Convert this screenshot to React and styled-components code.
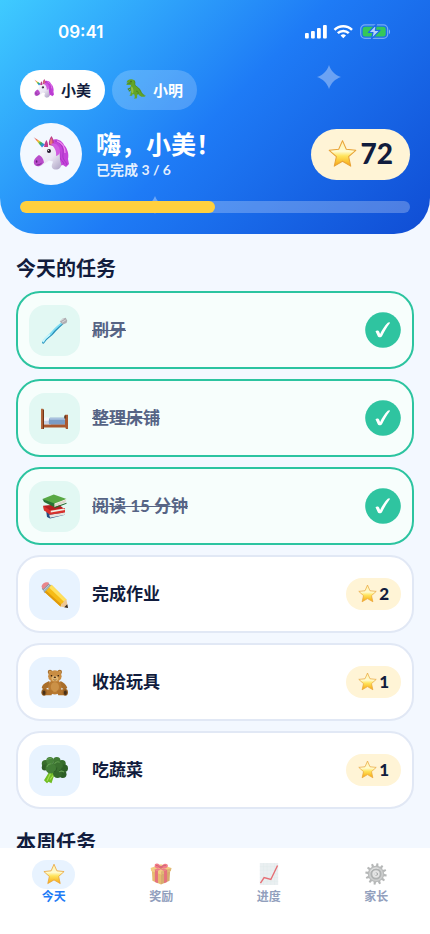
import { useState } from 'react'
import styled, { createGlobalStyle } from 'styled-components'

const GlobalStyle = createGlobalStyle`
    * {
        box-sizing: border-box;
    }
    body {
        margin: 0;
        background: #f3f8ff;
        color: #111c3d;
        font-family: 'Lato', 'Noto Sans CJK SC', sans-serif;
    }
    button {
        font-family: inherit;
        color: inherit;
        border: none;
        cursor: pointer;
    }
    h1, h2, p, ul {
        margin: 0;
        padding: 0;
    }
`

const Screen = styled.div`
    height: 100vh;
    display: flex;
    flex-direction: column;
    overflow: hidden;
`

const Header = styled.header`
    position: relative;
    flex-shrink: 0;
    padding: 0 20px 21px;
    color: #fff;
    border-radius: 0 0 36px 36px;
    background: linear-gradient(135deg, #3fcbff 0%, #1e7bf6 50%, #104dd4 100%);
`

const StatusBar = styled.div`
    display: flex;
    align-items: center;
    justify-content: space-between;
    height: 64px;
    padding: 0 20px 0 38px;
    margin-bottom: 6px;
`

const Clock = styled.span`
    font-family: 'Inter', sans-serif;
    font-size: 17px;
    font-weight: 600;
`

const Sparkle = styled.svg`
    position: absolute;
    left: ${({ $left }) => $left};
    top: ${({ $top }) => $top};
    fill: #fff;
    opacity: 0.35;
`

const Kids = styled.div`
    display: flex;
    gap: 7px;
    margin-bottom: 13px;
`

const KidChip = styled.button`
    display: flex;
    align-items: center;
    gap: 7px;
    height: 40px;
    padding: 0 14px 2px;
    border-radius: 20px;
    font-size: 15px;
    font-weight: 700;
    background: ${({ $active }) => ($active ? '#fff' : 'rgba(255, 255, 255, 0.2)')};
    && {
        color: ${({ $active }) => ($active ? '#111c3d' : '#fff')};
    }
`

const Profile = styled.div`
    display: flex;
    align-items: center;
    gap: 14px;
    margin-bottom: 16px;
`

const Avatar = styled.div`
    display: flex;
    align-items: center;
    justify-content: center;
    width: 62px;
    height: 62px;
    border-radius: 50%;
    background: #f3f8ff;
`

const Greeting = styled.div`
    flex: 1;
`

const Hello = styled.h1`
    font-size: 25px;
    line-height: 32px;
    font-weight: 700;
`

const DoneCount = styled.p`
    font-size: 14px;
    line-height: 20px;
    font-weight: 700;
    color: rgba(255, 255, 255, 0.88);
`

const Balance = styled.div`
    display: flex;
    align-items: center;
    gap: 4px;
    height: 51px;
    padding: 0 17px 2px;
    border-radius: 26px;
    background: #fff4d6;
    color: #111c3d;
    font-size: 28px;
    font-weight: 900;
`

const Track = styled.div`
    position: relative;
    height: 12px;
    border-radius: 6px;
    overflow: hidden;
    background: rgba(255, 255, 255, 0.25);
`

const Fill = styled.div`
    height: 100%;
    border-radius: 6px;
    background: #ffd03e;
`

const Main = styled.main`
    flex: 1;
    min-height: 0;
    overflow: hidden;
    display: flex;
    flex-direction: column;
    gap: 21px;
    padding: 22px 16px 0;
`

const SectionTitle = styled.h2`
    font-size: 20px;
    line-height: 24px;
    font-weight: 700;
    margin-bottom: 11px;
`

const TaskList = styled.ul`
    display: flex;
    flex-direction: column;
    gap: 10px;
    list-style: none;
`

const TaskCard = styled.button`
    display: flex;
    align-items: center;
    gap: 12px;
    width: 100%;
    height: 78px;
    padding: 0 11px;
    text-align: left;
    border-radius: 24px;
    && {
        border: 2px solid ${({ $done }) => ($done ? '#2cc4a0' : '#e1e8f5')};
    }
    background: ${({ $done }) => ($done ? '#f7fefc' : '#fff')};
`

const TaskIcon = styled.span`
    display: flex;
    align-items: center;
    justify-content: center;
    width: 51px;
    height: 51px;
    border-radius: 16px;
    background: ${({ $done }) => ($done ? '#e2f8f3' : '#e8f3ff')};
`

const TaskName = styled.span`
    flex: 1;
    padding-bottom: 3px;
    font-size: 17px;
    font-weight: 700;
    color: ${({ $done }) => ($done ? '#566485' : '#111c3d')};
    text-decoration: ${({ $done }) => ($done ? 'line-through' : 'none')};
    text-decoration-thickness: 1px;
`

const Reward = styled.span`
    display: flex;
    align-items: center;
    gap: 2px;
    height: 32px;
    padding: 0 12px 2px;
    border-radius: 16px;
    background: #fff4d6;
    font-size: 17px;
    font-weight: 900;
`

const TabBar = styled.nav`
    flex-shrink: 0;
    display: grid;
    grid-template-columns: repeat(4, 1fr);
    height: 86px;
    padding-top: 12px;
    background: #fff;
`

const Tab = styled.a`
    display: flex;
    flex-direction: column;
    align-items: center;
    text-decoration: none;
    font-size: 12px;
    line-height: 16px;
    font-weight: 700;
    color: ${({ $active }) => ($active ? '#1e7bf6' : '#929fbd')};
`

const TabIcon = styled.span`
    display: flex;
    align-items: center;
    justify-content: center;
    width: 43px;
    height: 29px;
    padding-bottom: 1px;
    border-radius: 15px;
    background: ${({ $active }) => ($active ? '#e8f3ff' : 'transparent')};
    svg {
        opacity: ${({ $active }) => ($active ? 1 : 0.65)};
    }
`

const Unicorn = ({ size }) => (
    <svg width={size} height={size} viewBox="0 0 36 36" aria-hidden="true">
        <defs>
            <linearGradient id="horn" x1="0" y1="0" x2="1" y2="1">
                <stop offset="0" stopColor="#c9b8dd" />
                <stop offset="0.25" stopColor="#f06a50" />
                <stop offset="0.42" stopColor="#f0c52e" />
                <stop offset="0.6" stopColor="#35b35c" />
                <stop offset="0.8" stopColor="#2b8fe6" />
                <stop offset="1" stopColor="#8b50d0" />
            </linearGradient>
            <linearGradient id="face" x1="0" y1="0" x2="1" y2="1">
                <stop offset="0" stopColor="#fff" />
                <stop offset="0.6" stopColor="#e9e5f2" />
                <stop offset="1" stopColor="#aaa0c2" />
            </linearGradient>
        </defs>
        <path d="M17 6C20 1 29 3 31 9c4 4 5 10 4 14l1 5-3 3-3-2-4 1-5-12z" fill="#c443d9" />
        <path d="M22 5c6 1 9 7 8 13s3 7 4 11M19 7c7 1 8 8 8 13s3 4 4 8" stroke="#a22fc0" strokeWidth="0.8" fill="none" />
        <path d="M24 5c6 2 8 7 8 12" stroke="#ef8bee" strokeWidth="1.3" fill="none" />
        <path d="M12 9c3-3 10-2 13 3 3 6 1 11 3 15 1 3-1 6-4 6.500-4 .5-6-2-5-5l1-3-4-1-7 5c-3 2-7 1-7.500-2-.5-4 4-6 6-10 2-4 2-6 4.500-8.500z" fill="url(#face)" />
        <path d="M6 19c-3 2-6 5-5 8.500 1 3 5 4 8 1l2-2c-1-4-2-6-5-7.500z" fill="#b94ccb" />
        <path d="M3.500 29c2 0 3.500-.6 5-1.700" stroke="#702084" strokeWidth="0.8" fill="none" />
        <ellipse cx="3.600" cy="25.500" rx="0.800" ry="1.200" fill="#631c77" />
        <path d="M0.500 1l11.500 7.500-3 3z" fill="url(#horn)" />
        <path d="M11 11c1-4 1-5 2.500-7 1 2 2 4 1.500 7zM16 9c-.5-4 .5-6 2.500-9 2 3 3 6 2 10z" fill="#bd3d8b" />
        <path d="M17 8c-.2-3 .4-4 1.300-6 1 2 1.300 4 .9 7z" fill="#e57a74" />
        <path d="M18 8c3 3 6 7 5 12 4-1 5-5 3-9-2-3-5-5-8-3z" fill="#d15be2" />
        <circle cx="16" cy="15" r="2" fill="#23182d" />
        <circle cx="15.400" cy="14.300" r="0.600" fill="#fff" />
    </svg>
)

const Dino = ({ size }) => (
    <svg width={size} height={size} viewBox="0 0 36 36" aria-hidden="true">
        <path d="M1 6C2 1 8-1 12 1c5 1 5 5 4 9 2 4 8 5 11 11 2 6 4 8 9 9-5 4-11 2-14-3l-2 1 0 5-1 2h-5l2-2-1-5-3-1-1 3h-5l2-2 1-8c-1-4-1-6 0-9l-7 0-2-2 6-2-6-1z" fill="#62a428" />
        <path d="M10 13c3 3 4 6 3 11l-2 2c-2-4-3-9-1-13z" fill="#93c046" />
        <path d="M9 16l-5 2 1 2M9 19l-4 3" stroke="#4d8a1d" strokeWidth="2" fill="none" />
        <path d="M15 3c2 4 0 7 2 9 4 3 7 5 9 10 2 4 4 6 7 7" stroke="#4b861f" strokeWidth="1.200" fill="none" />
        <path d="M18 22c4-1 5 3 3 6" stroke="#3f7a1a" strokeWidth="1.200" fill="none" />
        <path d="M2 8l8-1" stroke="#315d14" strokeWidth="0.900" />
        <circle cx="9" cy="4" r="1" fill="#262d10" />
    </svg>
)

const Star = ({ size }) => (
    <svg width={size} height={size} viewBox="0 0 36 36" aria-hidden="true">
        <defs>
            <linearGradient id="starGold" x1="0" y1="0" x2="0" y2="1">
                <stop offset="0" stopColor="#fff0a8" />
                <stop offset="0.42" stopColor="#fffbd0" />
                <stop offset="0.6" stopColor="#ffe45c" />
                <stop offset="1" stopColor="#f7a511" />
            </linearGradient>
        </defs>
        <path
            d="M18 2l4.700 10.800 11.800 1.200-8.900 8 2.600 11.700L18 27.700 7.800 33.700l2.600-11.700-8.900-8 11.800-1.200z"
            fill="url(#starGold)"
            stroke="#e8a338"
            strokeWidth="1.300"
            strokeLinejoin="round"
        />
    </svg>
)

const Toothbrush = ({ size }) => (
    <svg width={size} height={size} viewBox="0 0 36 36" aria-hidden="true">
        <path d="M3 34c4-7 9-8 13-13 4-5 8-8 14-14" stroke="#278fb9" strokeWidth="3.200" strokeLinecap="round" fill="none" />
        <path d="M3 33c3-7 9-8 12-13 4-5 8-8 14-13" stroke="#7fdef4" strokeWidth="2.400" strokeLinecap="round" fill="none" />
        <path d="M3 32c2-4 5-6 8-8" stroke="#c6f5fc" strokeWidth="2.400" strokeLinecap="round" fill="none" />
        <path d="M25 6l4-4 4-1 2 4-1 3-5 2z" fill="#aeadb1" />
        <path d="M26 5l5-3M28 7l5-3" stroke="#e4e4e6" strokeWidth="1" />
    </svg>
)

const Bed = ({ size }) => (
    <svg width={size} height={size} viewBox="0 0 36 36" aria-hidden="true">
        <path d="M0 5h3v27H0z" fill="#b5683c" />
        <path d="M2.500 6h1.500v26H2.500z" fill="#713619" />
        <path d="M4 25h29v5H4z" fill="#a9582c" />
        <path d="M4 25h29v1.300H4z" fill="#d28759" />
        <path d="M4 20h9v6H4z" fill="#c8d3e4" />
        <path d="M4 17c3-1 6-1 8 1v3H4z" fill="#f5f7fb" />
        <path d="M12 17h20v9H11c-1-3-1-7 1-9z" fill="#7b9cc4" />
        <path d="M12 17h20v2.500H11.500z" fill="#a9c2df" />
        <path d="M32 13h4v19h-3V30h-1z" fill="#a9582f" />
        <path d="M31 14h2v4h-2z" fill="#53331f" />
    </svg>
)

const Books = ({ size }) => (
    <svg width={size} height={size} viewBox="0 0 36 36" aria-hidden="true">
        <path d="M7 25l20-2 5 6-20 5-4-2z" fill="#244c80" />
        <path d="M11 29l20-3 1 3-20 4z" fill="#e6e4df" />
        <path d="M3 17l20-2 9 7-20 5-8-4z" fill="#b51e21" />
        <path d="M3 17l9 6 20-3v6l-20 3-8-6z" fill="#d8312c" />
        <path d="M13 23.500l18-3 1 2-19 3.500z" fill="#f2ede5" />
        <path d="M2 8L17 2l17 6-16 8z" fill="#58a844" />
        <path d="M2 8l16 6v5L4 12z" fill="#287334" />
        <path d="M18 14l16-6-1 5-15 6z" fill="#f6f1e8" />
        <path d="M18 16l15-6M18 17.500l15-6" stroke="#bcb5aa" strokeWidth="0.700" />
        <path d="M18 18.500l16-5.500v1.300l-16 6z" fill="#246a2f" />
    </svg>
)

const Pencil = ({ size }) => (
    <svg width={size} height={size} viewBox="0 0 36 36" aria-hidden="true">
        <path d="M9 3l5 3-9 10-4-6z" fill="#8396a4" />
        <path d="M11 5l-8 8M12 6l-8 8" stroke="#d5dfe5" strokeWidth="0.900" />
        <path d="M2 10c-4-4 3-10 8-8l1 1-8 8z" fill="#e9868d" />
        <path d="M14 5l20 20-8 9L5 15z" fill="#f6bb16" />
        <path d="M14 5l20 20-3 3L11 9z" fill="#ffe05c" />
        <path d="M7 13l21 19-2 2L5 15z" fill="#e09a0c" />
        <path d="M34 25l2 11-10-2c1-2 0-3 2-4s2-4 6-5z" fill="#edc794" />
        <path d="M35 31l1 5-5-1z" fill="#302b2b" />
    </svg>
)

const Teddy = ({ size }) => (
    <svg width={size} height={size} viewBox="0 0 36 36" aria-hidden="true">
        <circle cx="12" cy="4" r="3" fill="#a66e2d" />
        <circle cx="25" cy="4" r="3" fill="#a66e2d" />
        <circle cx="12" cy="4" r="1.500" fill="#d6a35a" />
        <circle cx="25" cy="4" r="1.500" fill="#d6a35a" />
        <path d="M11 16c-4 2-9 4-10 9l3 3 9-5zM26 16c4 2 8 5 9 9l-3 3-8-5z" fill="#a96e2b" />
        <ellipse cx="18.500" cy="24" rx="9" ry="10" fill="#b87a32" />
        <ellipse cx="18.500" cy="24" rx="5.500" ry="6.500" fill="#cb9147" />
        <ellipse cx="18.500" cy="9.500" rx="9" ry="8" fill="#c98d43" />
        <ellipse cx="18.500" cy="12.500" rx="4.500" ry="3.500" fill="#e3b773" />
        <ellipse cx="18.500" cy="11" rx="1.600" ry="1.100" fill="#35200f" />
        <path d="M16.500 14c1 1 3 1 4 0" stroke="#62401b" strokeWidth="0.800" fill="none" />
        <circle cx="14" cy="9" r="1.100" fill="#2d1d10" />
        <circle cx="23" cy="9" r="1.100" fill="#2d1d10" />
        <path d="M4 26l12 3-2 6-11 0zM33 26l-12 3 2 6 10 0z" fill="#b1732d" />
        <ellipse cx="4" cy="31" rx="3.500" ry="4.500" fill="#966023" />
        <ellipse cx="32.500" cy="31" rx="3.500" ry="4.500" fill="#966023" />
        <ellipse cx="4" cy="31.500" rx="2" ry="3" fill="#493018" />
        <ellipse cx="32.500" cy="31.500" rx="2" ry="3" fill="#493018" />
    </svg>
)

const Broccoli = ({ size }) => (
    <svg width={size} height={size} viewBox="0 0 36 36" aria-hidden="true">
        <path d="M12 18l6 1 4-2 4 4-9 5-3 9-4-2-2 2-4-4z" fill="#70bd24" />
        <path d="M13 21l-5 11M19 21l-7 9" stroke="#a4de50" strokeWidth="1.600" />
        <circle cx="6" cy="9" r="5" fill="#386d2b" />
        <circle cx="5" cy="14" r="4" fill="#315f27" />
        <circle cx="12" cy="5" r="5" fill="#47833a" />
        <circle cx="21" cy="5" r="5" fill="#417b35" />
        <circle cx="28" cy="9" r="5" fill="#356d2b" />
        <circle cx="31" cy="15" r="5" fill="#2d6026" />
        <circle cx="29" cy="23" r="5" fill="#2c5f25" />
        <circle cx="22" cy="22" r="6" fill="#34682a" />
        <circle cx="22" cy="12" r="7" fill="#3b7230" />
        <circle cx="13" cy="15" r="7" fill="#427d36" />
        <path d="M8 13c1-3 4-4 6-4M18 9c2-3 5-3 7-2M8 4c2-3 4-2 6-2M24 20c2-2 5-1 7 0" stroke="#639e50" strokeWidth="1.400" fill="none" />
        <path d="M17 20c3-1 4-3 4-6M24 18c3 0 4-2 4-4" stroke="#2a5723" strokeWidth="1" fill="none" />
    </svg>
)

const Gift = ({ size }) => (
    <svg width={size} height={size} viewBox="0 0 36 36" aria-hidden="true">
        <path d="M3 12l15 6v17L4 29z" fill="#d99726" />
        <path d="M18 18l15-6-1 17-14 6z" fill="#c18121" />
        <path d="M1 8l17-6 17 6-1 5-16 6-16-6z" fill="#eab542" />
        <path d="M18 14l17-6-1 5-16 6z" fill="#cc902c" />
        <path d="M8 11l5 2v20l-5-2zM28 11l-5 2v20l5-2z" fill="#d8293a" />
        <path d="M7 6l5-2 16 7-5 2zM28 6l-5-2-16 7 5 2z" fill="#e33c49" />
        <path d="M18 8C9 10 7 7 8 2c4-3 8 0 10 5 2-5 7-8 11-4 1 4-2 7-11 5z" fill="#ed3549" />
        <path d="M10 4c3 0 5 2 7 4 2-3 5-4 9-4" stroke="#a41425" strokeWidth="1.500" fill="none" />
        <circle cx="18" cy="7" r="2.500" fill="#c51d32" />
    </svg>
)

const Chart = ({ size }) => (
    <svg width={size} height={size} viewBox="0 0 36 36" aria-hidden="true">
        <path d="M3 0h30v36H3z" fill="#dfe8ea" />
        <path d="M3 6h30M3 12h30M3 18h30M3 24h30M3 30h30M9 0v36M15 0v36M21 0v36M27 0v36" stroke="#d0dde1" strokeWidth="0.700" />
        <path d="M4 33l6-9 11 3L32 4" stroke="#d9232c" strokeWidth="2.300" fill="none" />
    </svg>
)

const Gear = ({ size }) => (
    <svg width={size} height={size} viewBox="0 0 36 36" aria-hidden="true">
        {Array.from({ length: 12 }, (_, i) => (
            <path key={i} d="M15.800 6L16.500 0.500h3L20.200 6z" fill="#8f9292" transform={`rotate(${i * 30 + 8} 18 18)`} />
        ))}
        <circle cx="18" cy="18" r="13.500" fill="#949797" />
        <circle cx="18" cy="18" r="11.500" fill="#b4b6b6" />
        <circle cx="18" cy="18" r="9" fill="#858989" />
        <circle cx="18" cy="18" r="6" fill="#d6d7d7" />
        <path d="M9 14a10 10 0 0 1 13-5" stroke="#ddd" strokeWidth="1.300" fill="none" />
        <circle cx="18.500" cy="18" r="2.600" fill="#5d6161" />
        <circle cx="17.800" cy="18" r="1.700" fill="#eceeee" />
    </svg>
)

const StatusIcons = () => (
    <svg width="86" height="16" viewBox="0 0 86 16" aria-hidden="true">
        <g fill="#fff">
            <rect x="1" y="9" width="3.800" height="5.400" rx="1" />
            <rect x="7" y="7" width="3.800" height="7.400" rx="1" />
            <rect x="13" y="4" width="3.800" height="10.400" rx="1" />
            <rect x="19" y="1" width="3.800" height="13.400" rx="1" />
        </g>
        <g fill="none" stroke="#fff" strokeWidth="2.500">
            <path d="M30.500 5.800a12.300 12.300 0 0 1 17.500 0" />
            <path d="M33.800 9.200a7.700 7.700 0 0 1 11 0" />
        </g>
        <path d="M36.600 11.600a4 4 0 0 1 5.400 0L39.300 14.300z" fill="#fff" />
        <rect x="56.700" y="0.800" width="27" height="13.600" rx="4.300" fill="none" stroke="#fff" strokeOpacity="0.4" strokeWidth="1.200" />
        <path d="M85 5.500c1.300 .5 1.300 4 0 4.500z" fill="#fff" opacity="0.5" />
        <rect x="58.700" y="2.800" width="23" height="9.600" rx="2.500" fill="#35c759" />
        <path d="M72.500 0L64.500 8.500h4.500L67.500 15l8.500-8.700h-4.700z" fill="#b6d3fb" stroke="#1c6bea" strokeWidth="1.200" strokeLinejoin="round" />
    </svg>
)

const CheckBadge = () => (
    <svg width="36" height="36" viewBox="0 0 36 36" aria-hidden="true">
        <circle cx="18" cy="18" r="17.800" fill="#2fc4a0" />
        <path d="M10.500 19.300c1.200-1.400 3.200-1 3.700.5l.9 2.200c1.800-4 4.400-7.800 7.600-11.200.8-.8 2.700-.8 2.100.4-3 4-5.500 8.200-7.700 12.800-.6 1.600-3.700 1.800-4.300.2z" fill="#fff" />
    </svg>
)

const KIDS = [
    { name: '小美', Icon: Unicorn },
    { name: '小明', Icon: Dino },
]

const TASKS = [
    { name: '刷牙', Icon: Toothbrush, stars: 1, done: true },
    { name: '整理床铺', Icon: Bed, stars: 1, done: true },
    { name: '阅读 15 分钟', Icon: Books, stars: 2, done: true },
    { name: '完成作业', Icon: Pencil, stars: 2, done: false },
    { name: '收拾玩具', Icon: Teddy, stars: 1, done: false },
    { name: '吃蔬菜', Icon: Broccoli, stars: 1, done: false },
]

const TABS = [
    { name: '今天', Icon: Star },
    { name: '奖励', Icon: Gift },
    { name: '进度', Icon: Chart },
    { name: '家长', Icon: Gear },
]

const SPARKLE_PATH = 'M12 0C14 6 18 10 24 12C18 14 14 18 12 24C10 18 6 14 0 12C6 10 10 6 12 0z'

const Task = ({ task, onToggle }) => (
    <li>
        <TaskCard type="button" $done={task.done} aria-pressed={task.done} onClick={onToggle}>
            <TaskIcon $done={task.done}>
                <task.Icon size={27} />
            </TaskIcon>
            <TaskName $done={task.done}>{task.name}</TaskName>
            {task.done ? <CheckBadge /> : (
                <Reward>
                    <Star size={19} />
                    {task.stars}
                </Reward>
            )}
        </TaskCard>
    </li>
)

const App = () => {
    const [kid, setKid] = useState(0)
    const [tab, setTab] = useState(0)
    const [tasks, setTasks] = useState(TASKS)

    const done = tasks.filter(t => t.done).length
    const KidIcon = KIDS[kid].Icon

    const toggle = (index) => {
        setTasks(tasks.map((t, i) => (i === index ? { ...t, done: !t.done } : t)))
    }

    return (
        <Screen>
            <GlobalStyle />
            <Header>
                <Sparkle $left="calc(100% - 113px)" $top="65px" width="24" height="24" viewBox="0 0 24 24">
                    <path d={SPARKLE_PATH} />
                </Sparkle>
                <Sparkle $left="34%" $top="196px" width="18" height="18" viewBox="0 0 24 24">
                    <path d={SPARKLE_PATH} />
                </Sparkle>
                <StatusBar>
                    <Clock>09:41</Clock>
                    <StatusIcons />
                </StatusBar>
                <Kids>
                    {KIDS.map(({ name, Icon }, i) => (
                        <KidChip key={name} type="button" $active={i === kid} onClick={() => setKid(i)}>
                            <Icon size={20} />
                            {name}
                        </KidChip>
                    ))}
                </Kids>
                <Profile>
                    <Avatar>
                        <KidIcon size={36} />
                    </Avatar>
                    <Greeting>
                        <Hello>嗨，{KIDS[kid].name}！</Hello>
                        <DoneCount>已完成 {done} / {tasks.length}</DoneCount>
                    </Greeting>
                    <Balance>
                        <Star size={29} />
                        72
                    </Balance>
                </Profile>
                <Track role="progressbar" aria-valuenow={done} aria-valuemin={0} aria-valuemax={tasks.length}>
                    <Fill style={{ width: `${(done / tasks.length) * 100}%` }} />
                </Track>
            </Header>
            <Main>
                <section>
                    <SectionTitle>今天的任务</SectionTitle>
                    <TaskList>
                        {tasks.map((task, i) => (
                            <Task key={task.name} task={task} onToggle={() => toggle(i)} />
                        ))}
                    </TaskList>
                </section>
                <section>
                    <SectionTitle>本周任务</SectionTitle>
                </section>
            </Main>
            <TabBar>
                {TABS.map(({ name, Icon }, i) => (
                    <Tab key={name} href="#" $active={i === tab} onClick={() => setTab(i)}>
                        <TabIcon $active={i === tab}>
                            <Icon size={22} />
                        </TabIcon>
                        {name}
                    </Tab>
                ))}
            </TabBar>
        </Screen>
    )
}

export default App
